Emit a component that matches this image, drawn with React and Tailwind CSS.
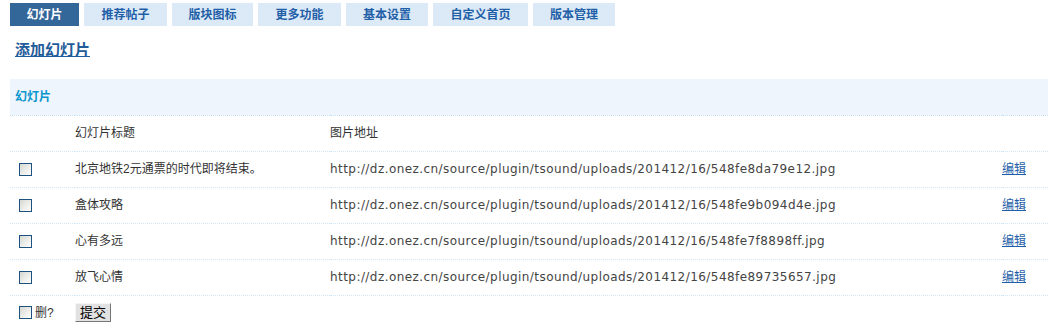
const tabs = ["幻灯片", "推荐帖子", "版块图标", "更多功能", "基本设置", "自定义首页", "版本管理"];
const tabWidths = ["w-[69px]", "w-[83px]", "w-[81px]", "w-[83px]", "w-[82px]", "w-[95px]", "w-[82px]"];

const slides = [
  { title: "北京地铁2元通票的时代即将结束。", url: "http://dz.onez.cn/source/plugin/tsound/uploads/201412/16/548fe8da79e12.jpg" },
  { title: "盒体攻略", url: "http://dz.onez.cn/source/plugin/tsound/uploads/201412/16/548fe9b094d4e.jpg" },
  { title: "心有多远", url: "http://dz.onez.cn/source/plugin/tsound/uploads/201412/16/548fe7f8898ff.jpg" },
  { title: "放飞心情", url: "http://dz.onez.cn/source/plugin/tsound/uploads/201412/16/548fe89735657.jpg" },
];

function Box() {
  return (
    <span className="inline-block w-[13px] h-[13px] border border-[#1c5180] bg-gradient-to-br from-[#d8d8d2] to-white align-middle" />
  );
}

export default function App() {
  return (
    <div className="w-[1058px] h-[334px] bg-white text-[12px] text-[#333] font-['Liberation_Sans','Noto_Sans_CJK_SC',sans-serif] overflow-hidden">
      {/* Tabs */}
      <div className="flex gap-[5px] pl-[10px] pt-[3px]">
        {tabs.map((t, i) => (
          <div
            key={t}
            className={`${tabWidths[i]} h-[23px] flex items-center justify-center font-bold ${
              i === 0 ? "bg-[#336699] text-white" : "bg-[#dce9f6] text-[#1f5fa8]"
            }`}
          >
            {t}
          </div>
        ))}
      </div>

      {/* Add link */}
      <div className="pl-[15px] pt-[14px] h-[53px]">
        <a className="text-[15px] font-bold text-[#1f5c99] underline leading-[20px]">添加幻灯片</a>
      </div>

      {/* Table */}
      <table className="ml-[10px] w-[1038px] border-collapse">
        <thead>
          <tr className="bg-[#eef5fd] h-[36px] border-b border-dotted border-[#c4e1f6]">
            <th colSpan={4} className="text-left pl-[5px] font-bold text-[#0a96cc]">幻灯片</th>
          </tr>
        </thead>
        <tbody>
          <tr className="h-[36px] border-b border-dotted border-[#cfe7f8]">
            <td className="w-[65px]" />
            <td className="w-[255px]">幻灯片标题</td>
            <td>图片地址</td>
            <td className="w-[46px]" />
          </tr>
          {slides.map((s) => (
            <tr key={s.url} className="h-[36px] border-b border-dotted border-[#cfe7f8]">
              <td className="pl-[9px]"><Box /></td>
              <td>{s.title}</td>
              <td className="font-['DejaVu_Sans',sans-serif] text-[12px] tracking-[0.44px] text-[#444]">{s.url}</td>
              <td>
                <a className="text-[#1f5fa8] underline">编辑</a>
              </td>
            </tr>
          ))}
          <tr className="h-[34px]">
            <td className="pl-[9px] whitespace-nowrap">
              <Box />
              <span className="ml-[3px] align-middle text-[#333]">删?</span>
            </td>
            <td colSpan={3}>
              <button className="h-[19px] px-[4px] bg-[#e2e2e2] border border-[#f5f5f5] border-r-[#777] border-b-[#777] text-black text-[13px] leading-[15px]">
                提交
              </button>
            </td>
          </tr>
        </tbody>
      </table>
    </div>
  );
}
